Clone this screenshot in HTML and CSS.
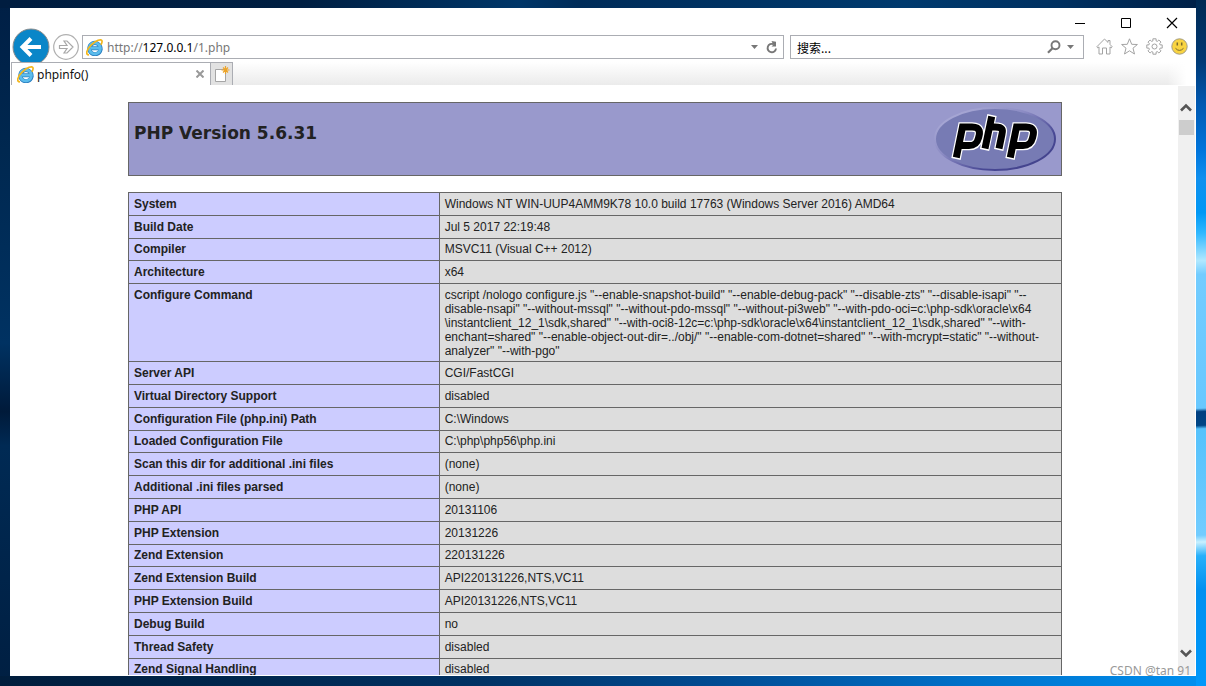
FILE: index.html
```html
<!DOCTYPE html>
<html lang="zh-CN">
<head>
<meta charset="utf-8">
<title>phpinfo()</title>
<link rel="stylesheet" href="styles.css">
</head>
<body>
<svg width="0" height="0" class="defs" aria-hidden="true">
  <defs>
    <symbol id="ie" viewBox="0 0 16 16">
      <path d="M13.6 9.600A5.300 5.300 0 1 1 13.700 8.200H4.600" fill="none" stroke="#2b7fc0" stroke-width="3.800" transform="translate(0 .5)"/>
      <path d="M13.400 9.600A5.200 5.200 0 1 1 13.500 8.300H4.600" fill="none" stroke="#5bbcec" stroke-width="2.600" transform="translate(0 .3)"/>
      <path d="M2.800 15C-.8 14.800.4 10 5 5.600C9.500 1.300 14.300-.4 15 1.700C15.400 2.900 14.800 4.200 14 5.400" fill="none" stroke="#f3b61b" stroke-width="1.600"/>
    </symbol>
  </defs>
</svg>
<div class="browser">
  <div class="titlebar">
    <button class="win" aria-label="Minimize"><svg width="12" height="12"><path d="M1 6.500h10" stroke="#000"/></svg></button>
    <button class="win" aria-label="Maximize"><svg width="12" height="12"><path d="M1.500 1.500h9v9h-9z" stroke="#000" fill="none"/></svg></button>
    <button class="win" aria-label="Close"><svg width="12" height="12"><path d="M1 1l10 10M11 1L1 11" stroke="#000" stroke-width="1.200"/></svg></button>
  </div>
  <div class="toolbar">
    <button class="back" aria-label="Back"><svg width="38" height="38" viewBox="0 0 38 38"><circle cx="19" cy="19" r="18" fill="#0a86c8" stroke="#8b8b8b"/><path d="M29 19H11M19 10.500L10.500 19L19 27.500" fill="none" stroke="#fff" stroke-width="4"/></svg></button>
    <button class="forward" aria-label="Forward"><svg width="26" height="26" viewBox="0 0 26 26"><circle cx="13" cy="13" r="12.300" fill="#fff" stroke="#b0b0b0" stroke-width="1.200"/><path d="M6.500 11.500H14L11 7H14L20 13L14 19H11L14 14.500H6.500Z" fill="none" stroke="#a8a8a8" stroke-width="1.200"/></svg></button>
    <div class="address">
      <svg class="ie" width="17" height="17"><use href="#ie"/></svg>
      <a class="url" href="#page">http://<span class="host">127.0.0.1</span>/1.php</a>
      <button aria-label="Show address list"><svg width="7" height="4"><path d="M0 0h7L3.500 4z" fill="#777"/></svg></button>
      <button aria-label="Refresh"><svg width="12" height="13" viewBox="0 0 12 13"><path d="M7.500 3.200A4.200 4.200 0 1 0 10 7.500" fill="none" stroke="#777" stroke-width="1.900"/><path d="M5.500 0L10 .8V5.500H5.500L7.300 3.800Z" fill="#777"/></svg></button>
    </div>
    <div class="search">
      <input type="text" aria-label="搜索" value="搜索...">
      <button aria-label="Search"><svg width="14" height="14" viewBox="0 0 14 14"><circle cx="8.500" cy="5.200" r="4" fill="none" stroke="#777" stroke-width="1.900"/><path d="M5.700 8L1 12.800" stroke="#777" stroke-width="2.200"/></svg></button>
      <button aria-label="Search options"><svg width="7" height="4"><path d="M0 0h7L3.500 4z" fill="#777"/></svg></button>
    </div>
    <div class="tools">
      <button aria-label="Home"><svg width="17" height="17" viewBox="0 0 17 17"><path d="M8.500 1L12 4.400V2.500H14V6.400L16.200 8.800L15.200 9.900L14 8.900V16H10.500V10H6.500V16H3V8.900L1.800 9.900L.8 8.800Z" fill="none" stroke="#a3a3a3"/></svg></button>
      <button aria-label="Favorites"><svg width="17" height="17" viewBox="0 0 17 17"><path d="M8.500 .8L10.700 6.300L16.400 6.500L12 10.200L13.500 16L8.500 12.800L3.500 16L5 10.200L.6 6.500L6.300 6.300Z" fill="none" stroke="#a3a3a3"/></svg></button>
      <button aria-label="Tools"><svg width="17" height="17" viewBox="0 0 17 17"><path d="M6.900 2.900V.8H10.100V2.900L11.300 3.400L12.900 2L15 4.100L13.600 5.700L14.100 6.900H16.200V10.100H14.100L13.600 11.300L15 12.900L12.900 15L11.300 13.600L10.100 14.100V16.200H6.900V14.100L5.700 13.600L4.100 15L2 12.900L3.400 11.300L2.900 10.100H.8V6.900H2.900L3.400 5.700L2 4.100L4.100 2L5.700 3.400Z" fill="none" stroke="#a3a3a3"/><circle cx="8.500" cy="8.500" r="2.500" fill="none" stroke="#a3a3a3"/></svg></button>
      <button aria-label="Feedback"><svg width="17" height="17" viewBox="0 0 17 17"><circle cx="8.500" cy="8.500" r="7.700" fill="#f9d441" stroke="#a39c82"/><path d="M6.300 4.500v3M10.700 4.500v3" stroke="#7b6a2c" stroke-width="1.500"/><path d="M4.500 10.300Q8.500 14.500 12.500 10.300" fill="none" stroke="#7b6a2c"/></svg></button>
    </div>
  </div>
  <div class="tabs">
    <div class="tab">
      <svg class="ie" width="17" height="17"><use href="#ie"/></svg>
      <span class="name">phpinfo()</span>
      <button aria-label="Close tab"><svg width="8" height="8"><path d="M.5 .5l7 7M7.500 .5l-7 7" stroke="#999" stroke-width="2"/></svg></button>
    </div>
    <button class="newtab" aria-label="New tab"><svg width="16" height="17" viewBox="0 0 16 17"><path d="M1.500 3.500h10v12h-10z" fill="#fff" stroke="#a5a5a5"/><path d="M11.500 0v8M7.500 4h8M9 1.500l5 5M14 1.500l-5 5" stroke="#eda428" stroke-width="1.200"/></svg></button>
    <div class="strip"></div>
  </div>
  <div class="view">
    <main class="page" id="page">
      <header class="banner">
        <h1>PHP Version 5.6.31</h1>
        <svg class="logo" width="122" height="66" viewBox="0 0 122 66" role="img" aria-label="PHP logo">
          <defs><linearGradient id="rim" x1="0" y1="0" x2="1" y2="1"><stop offset="0" stop-color="#b4b4dc"/><stop offset=".4" stop-color="#8c8cc4"/><stop offset=".7" stop-color="#484894"/><stop offset="1" stop-color="#404088"/></linearGradient></defs>
          <ellipse cx="61" cy="33" rx="60" ry="31" fill="#777bb4" stroke="url(#rim)" stroke-width="2"/>
          <g fill="none">
            <g stroke="#fff" stroke-width="9.500"><path d="M22 53L28.500 21H38C47 21 46 27 44.500 32C43 38 40 39.500 35 39.500H25.500"/><path d="M50.500 44L58 9M56 21H61C69 21 69 24 68 28L64.700 44"/><path d="M76 53L82.500 21H92C101 21 100 27 98.500 32C97 38 94 39.500 89 39.500H79.500"/></g>
            <g stroke="#000" stroke-width="7"><path d="M22.300 51.500L28.500 21H38C47 21 46 27 44.500 32C43 38 40 39.500 35 39.500H25.500"/><path d="M51 42.500L57.700 10.500M56 21H61C69 21 69 24 68 28L65 42.500"/><path d="M76.300 51.500L82.500 21H92C101 21 100 27 98.500 32C97 38 94 39.500 89 39.500H79.500"/></g>
          </g>
        </svg>
      </header>
      <table>
        <tbody>
        <tr><th scope="row">System</th><td>Windows NT WIN-UUP4AMM9K78 10.0 build 17763 (Windows Server 2016) AMD64</td></tr>
        <tr><th scope="row">Build Date</th><td>Jul 5 2017 22:19:48</td></tr>
        <tr class="compact"><th scope="row">Compiler</th><td>MSVC11 (Visual C++ 2012)</td></tr>
        <tr><th scope="row">Architecture</th><td>x64</td></tr>
        <tr class="long"><th scope="row">Configure Command</th><td>cscript /nologo configure.js "--enable-snapshot-build" "--enable-debug-pack" "--disable-zts" "--disable-isapi" "--<br>disable-nsapi" "--without-mssql" "--without-pdo-mssql" "--without-pi3web" "--with-pdo-oci=c:\php-sdk\oracle\x64<br>\instantclient_12_1\sdk,shared" "--with-oci8-12c=c:\php-sdk\oracle\x64\instantclient_12_1\sdk,shared" "--with-<br>enchant=shared" "--enable-object-out-dir=../obj/" "--enable-com-dotnet=shared" "--with-mcrypt=static" "--without-<br>analyzer" "--with-pgo"</td></tr>
        <tr><th scope="row">Server API</th><td>CGI/FastCGI</td></tr>
        <tr><th scope="row">Virtual Directory Support</th><td>disabled</td></tr>
        <tr><th scope="row">Configuration File (php.ini) Path</th><td>C:\Windows</td></tr>
        <tr class="compact"><th scope="row">Loaded Configuration File</th><td>C:\php\php56\php.ini</td></tr>
        <tr><th scope="row">Scan this dir for additional .ini files</th><td>(none)</td></tr>
        <tr><th scope="row">Additional .ini files parsed</th><td>(none)</td></tr>
        <tr><th scope="row">PHP API</th><td>20131106</td></tr>
        <tr><th scope="row">PHP Extension</th><td>20131226</td></tr>
        <tr class="compact"><th scope="row">Zend Extension</th><td>220131226</td></tr>
        <tr><th scope="row">Zend Extension Build</th><td>API220131226,NTS,VC11</td></tr>
        <tr><th scope="row">PHP Extension Build</th><td>API20131226,NTS,VC11</td></tr>
        <tr><th scope="row">Debug Build</th><td>no</td></tr>
        <tr><th scope="row">Thread Safety</th><td>disabled</td></tr>
        <tr class="compact"><th scope="row">Zend Signal Handling</th><td>disabled</td></tr>
        </tbody>
      </table>
    </main>
    <div class="scrollbar">
      <button aria-label="Scroll up"><svg width="12" height="9"><path d="M1 7.500L6 2.500L11 7.500" fill="none" stroke="#555" stroke-width="2.600"/></svg></button>
      <div class="thumb"></div>
      <button class="down" aria-label="Scroll down"><svg width="12" height="9"><path d="M1 1.500L6 6.500L11 1.500" fill="none" stroke="#555" stroke-width="2.600"/></svg></button>
    </div>
  </div>
  <div class="watermark">CSDN @tan 91</div>
</div>
</body>
</html>
```

FILE: styles.css
```css
* { box-sizing: border-box; }
html, body { height: 100%; margin: 0; }
body {
  padding: 8px 10px 10px;
  overflow: hidden;
  background:
    linear-gradient(178deg, #002952 0, #003a76 9%, #0058b0 15%, #0075dc 22%, #1090ee 26%, #0098f5 31%, #30b8ff 34%, #b0e8ff 38%, #72ccff 40%, #68c8ff 59.5%, #003f80 60%, #004686 62%, #55c2fc 62.5%, #72ccff 78%, #c8f0ff 79%, #28b0fa 81%, #0090f0 86%, #0098fa 100%) right / 10px 100% no-repeat,
    linear-gradient(90deg, #001d3c, #00264d 20%, #003264 40%, #004c94 60%, #0070c8 80%, #0090f0) bottom / 100% 10px no-repeat,
    linear-gradient(90deg, #001d40, #001f42 25%, #003668 43%, #002c59 48%, #003a6e 75%, #003060 88%, #001f45) top / 100% 8px no-repeat,
    linear-gradient(#001f45, #002850 22%, #003262 50%, #001a3a 60%, #002a54 65%, #001f42) left / 10px 100% no-repeat,
    #002247;
}
button { display: flex; align-items: center; justify-content: center; margin: 0; padding: 0; border: 0; background: none; }
svg { display: block; flex: none; }
.defs { position: absolute; }
.browser {
  position: relative;
  display: flex;
  flex-direction: column;
  height: 100%;
  background: #fff;
  overflow: hidden;
  font-family: "Noto Sans", "Noto Sans CJK SC", sans-serif;
  font-size: 12px;
}
.titlebar { display: flex; justify-content: flex-end; height: 27px; padding: 2px 1px 0 0; }
.win { width: 46px; height: 26px; }
.toolbar { display: flex; height: 24px; align-items: center; padding: 0 8px 0 2px; flex: none; }
.back { width: 38px; margin-right: 3px; flex: none; }
.forward { width: 26px; margin-right: 3px; flex: none; }
.address, .search { display: flex; align-items: center; height: 24px; border: 1px solid #abadb3; }
.address { flex: 1; min-width: 0; padding: 0 5px 0 3px; gap: 8px; }
.search { flex: 0 1 294px; margin: 0 12px 0 6px; padding: 0 9px 0 6px; gap: 6px; }
.url { flex: 1; margin-left: -4px; color: #777; text-decoration: none; }
.host { color: #000; }
.search input { flex: 1; min-width: 0; padding: 0; border: 0; outline: 0; font: 12px "Noto Sans CJK SC", sans-serif; color: #000; background: none; }
.tools { display: flex; gap: 8px; padding-bottom: 2px; }
.tabs { display: flex; height: 26px; padding: 3px 0 0 1px; flex: none; }
.tab { display: flex; align-items: center; width: 199px; padding: 0 6px 0 5px; border: 1px solid #abadb3; border-width: 1px 0 0 1px; background: #fff; position: relative; }
.name { flex: 1; margin-left: 3px; color: #111; }
.newtab { width: 23px; border: 1px solid #abadb3; border-bottom: 0; background: #e2e2e2; }
.strip { flex: 1; background: linear-gradient(90deg, transparent 97%, #fff 99%), linear-gradient(#fff, #ebebeb); }
.view { display: flex; flex: 1; min-height: 0; padding: 1px 1px 1px 0; }
.page { flex: 1; min-width: 0; overflow: hidden; padding: 16px 116px 0 118px; color: #222; font-family: "Liberation Sans", Arial, sans-serif; }
.banner { display: flex; justify-content: space-between; height: 74px; margin-bottom: 16px; padding: 3px 5px 0 5px; border: 1px solid #666; background: #9999cc; }
h1 { margin: 16px 0 0; font: bold 17px/22px "DejaVu Sans", Verdana, sans-serif; }
table { width: 100%; border-collapse: collapse; table-layout: fixed; font-size: 12px; line-height: 14px; }
th, td { padding: 4px 5px; border: 1px solid #666; text-align: left; vertical-align: top; }
th { width: 33.3%; background: #ccccff; }
td { background: #ddd; white-space: nowrap; }
.compact th, .compact td { padding-top: 3px; }
.long th, .long td { padding-bottom: 3px; }
.scrollbar { display: flex; flex-direction: column; width: 17px; background: #f0f0f0; }
.scrollbar button { height: 17px; margin-top: 13px; padding-right: 1px; }
.thumb { height: 15px; margin: 4px 1px 0; background: #cdcdcd; }
.scrollbar .down { margin: auto 0 13px; }
.watermark { position: absolute; right: 5px; bottom: 0; color: #999; font: 12px/10px "Noto Sans", sans-serif; }
```
